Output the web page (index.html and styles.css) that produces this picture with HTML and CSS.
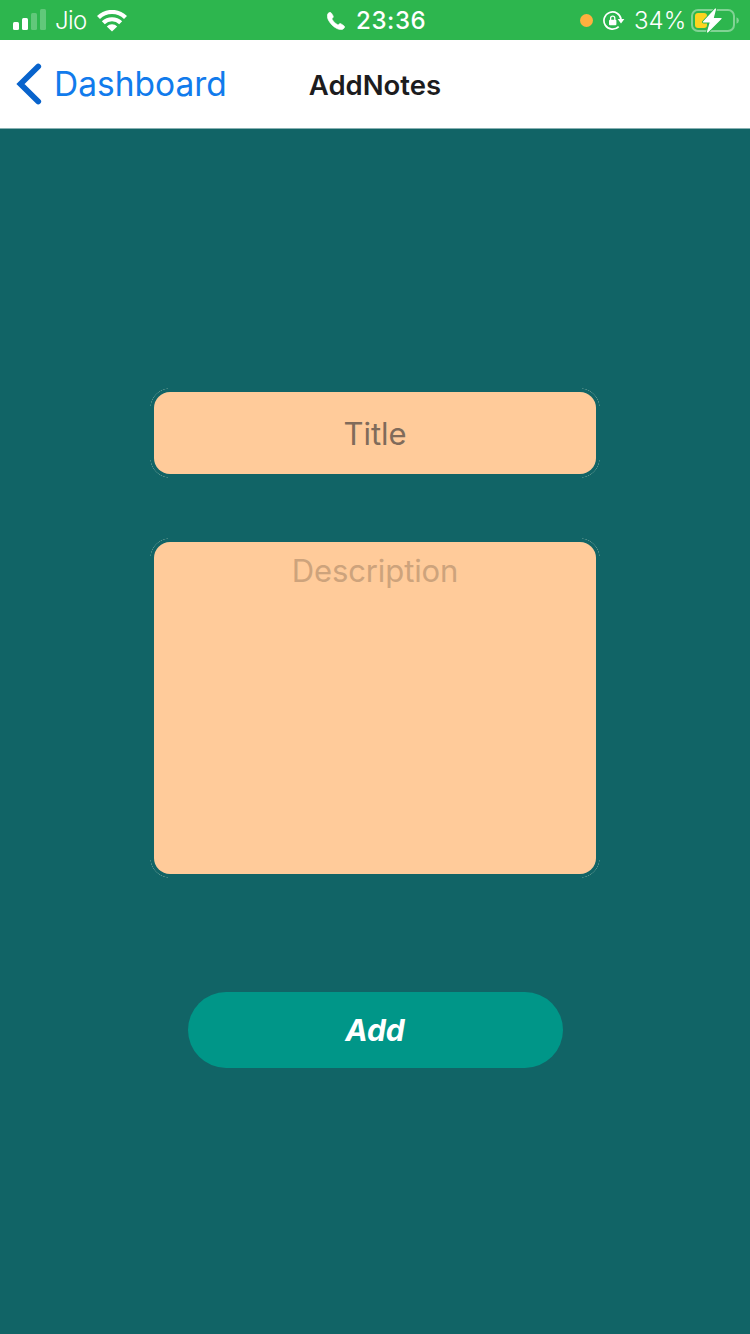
FILE: index.html
```html
<!DOCTYPE html>
<html lang="en">
<head>
<meta charset="utf-8">
<title>AddNotes</title>
<link rel="stylesheet" href="styles.css">
</head>
<body>
<div class="status">
  <div class="status-left">
    <svg class="signal" width="34" height="22" viewBox="0 0 34 22"><g fill="#fff"><rect x="0" y="13" width="6" height="8" rx="1.5"/><rect x="9" y="9" width="6" height="12" rx="1.5"/><rect x="18" y="4" width="6" height="17" rx="1.5" opacity=".25"/><rect x="27" y="0" width="6" height="21" rx="1.5" opacity=".25"/></g></svg>
    <span class="carrier">Jio</span>
    <svg class="wifi" width="30" height="22" viewBox="0 0 30 22"><path d="M1.5 7.500a19.200 19.200 0 0 1 27 0M6.300 12.800a12.400 12.400 0 0 1 17.400 0" fill="none" stroke="#fff" stroke-width="4.200"/><path d="M15 21.500l-5.200-5.100a7.400 7.400 0 0 1 10.400 0z" fill="#fff"/></svg>
  </div>
  <div class="status-mid">
    <svg width="18" height="18" viewBox="0 0 18 18"><path d="M1.2 1.3C2.6-.2 3.700 .1 4.500 1.300L6 3.700C6.600 4.900 6.200 5.500 5.300 6.300C4.900 6.800 5 7.200 5.400 7.800C6.700 9.900 8.200 11.400 10.300 12.600C10.900 12.900 11.300 12.900 11.700 12.500C12.500 11.600 13.200 11.300 14.200 11.900L16.700 13.600C17.900 14.400 17.900 15.300 16.800 16.400C15.400 17.900 12.700 18 9.800 16.500C6.200 14.600 3.100 11.500 1.300 7.900C0 5.200-.1 2.800 1.200 1.300Z" fill="#fff" stroke="#fff" stroke-width=".6"/></svg>
    <span class="clock">23:36</span>
  </div>
  <div class="status-right">
    <span class="dot"></span>
    <svg class="lock" width="22" height="20" viewBox="0 0 22 20"><path d="M15.700 15.600A8.600 8.600 0 1 1 18.100 8.500" fill="none" stroke="#fff" stroke-width="1.700"/><path d="M14.600 8h6.800L18 12.500z" fill="#fff"/><rect x="6" y="8.700" width="7.400" height="5.600" rx="1" fill="#fff"/><path d="M7.600 9V7.300a2.100 2.100 0 0 1 4.200 0V9" fill="none" stroke="#fff" stroke-width="1.300"/></svg>
    <span class="percent">34%</span>
    <svg class="battery" width="50" height="26" viewBox="0 0 50 26"><rect x="2" y="3" width="42" height="21" rx="6" fill="none" stroke="#fff" stroke-opacity=".4" stroke-width="2"/><path d="M46.500 10.200q2.400 1 2.400 3.300t-2.400 3.300z" fill="#fff" fill-opacity=".4"/><rect x="5" y="6" width="12" height="15" rx="3" fill="#fdd420"/><path d="M25.500 2L13.500 15h7L17.500 25L31 11.500h-8z" fill="#2db64e" stroke="#2db64e" stroke-width="3" stroke-linejoin="round"/><path d="M25.500 2L13.500 15h7L17.500 25L31 11.500h-8z" fill="#fff" stroke="#fff" stroke-width="1.200" stroke-linejoin="round"/></svg>
  </div>
</div>
<header class="nav">
  <a class="back"><svg width="26" height="42" viewBox="0 0 26 42"><path d="M22.200 3.500L4.500 21l17.700 17.500" fill="none" stroke="#0863cc" stroke-width="5.800" stroke-linecap="round" stroke-linejoin="miter"/></svg><span class="back-label">Dashboard</span></a>
  <h1 class="title">AddNotes</h1>
</header>
<main class="form">
  <div class="field field-title"><div class="box"><span class="hint">Title</span></div></div>
  <div class="field field-desc"><div class="box"><span class="hint">Description</span></div></div>
  <button class="add"><span>Add</span></button>
</main>
</body>
</html>
```
FILE: styles.css
```css
* { box-sizing: border-box; }
body { margin: 0; width: 750px; height: 1334px; display: flex; flex-direction: column; background: #116466; font-family: Inter, "Liberation Sans", sans-serif; overflow: hidden; }
svg { display: block; flex: none; }
span { white-space: nowrap; }
.status { height: 40px; background: #2db64e; color: #fff; display: grid; grid-template-columns: 250px 250px 250px; align-items: center; font-size: 24px; line-height: 40px; }
.status-left { display: flex; align-items: center; padding-left: 13px; }
.signal { margin-top: -1px; }
.carrier { width: 33px; margin: 0 9px 0 8px; font-weight: 300; font-size: 24px; letter-spacing: -0.6px; }
.status-mid { display: flex; align-items: center; padding: 1px 0 0 77px; gap: 11px; }
.clock { font-weight: 500; letter-spacing: 0.6px; }
.status-right { display: flex; align-items: center; padding-left: 80px; }
.dot { width: 13px; height: 13px; border-radius: 50%; background: #ffb03f; margin: 0 10px 0 0; }
.percent { width: 51px; margin: 0 5px 0 9px; font-weight: 300; }
.battery { margin-top: -2px; }
.nav { height: 88px; background: #fff; display: grid; grid-template-columns: 250px 250px 250px; align-items: center; }
.back { display: flex; align-items: center; padding-left: 16px; gap: 12px; color: #117bec; }
.back-label { font-size: 33.5px; line-height: 40px; }
.title { margin: 0; padding-top: 1px; font-size: 27.5px; line-height: 40px; font-weight: 600; color: #1c1c1e; text-align: center; }
.form { flex: 1; border-top: 1px solid #88b1b2; display: flex; flex-direction: column; align-items: center; padding-top: 259px; }
.field {
  --arc: #5c948d;
  width: 450px; padding: 4px;
  background:
    radial-gradient(circle at 20px 20px, transparent 19px, var(--arc) 19.5px, transparent 20px) 0 0 / 18px 18px no-repeat,
    radial-gradient(circle at -2px 20px, transparent 19px, var(--arc) 19.5px, transparent 20px) 100% 0 / 18px 18px no-repeat,
    radial-gradient(circle at 20px -2px, transparent 19px, var(--arc) 19.5px, transparent 20px) 0 100% / 18px 18px no-repeat,
    radial-gradient(circle at -2px -2px, transparent 19px, var(--arc) 19.5px, transparent 20px) 100% 100% / 18px 18px no-repeat;
}
.box { height: 100%; border-radius: 16px; background: #ffcb9a; display: flex; justify-content: center; font-size: 31px; line-height: 40px; }
.field-title { height: 90px; }
.field-title .box { padding-top: 22px; color: #806b5a; }
.field-desc { height: 340px; margin-top: 60px; }
.field-desc .box { padding-top: 9px; color: #cda37c; letter-spacing: -0.1px; }
.add { margin: 114px 0 0; padding: 0; border: 0; width: 375px; height: 76px; border-radius: 38px; background: #009688; color: #fff; font: italic 700 30px/76px Inter, "Liberation Sans", sans-serif; }
```
